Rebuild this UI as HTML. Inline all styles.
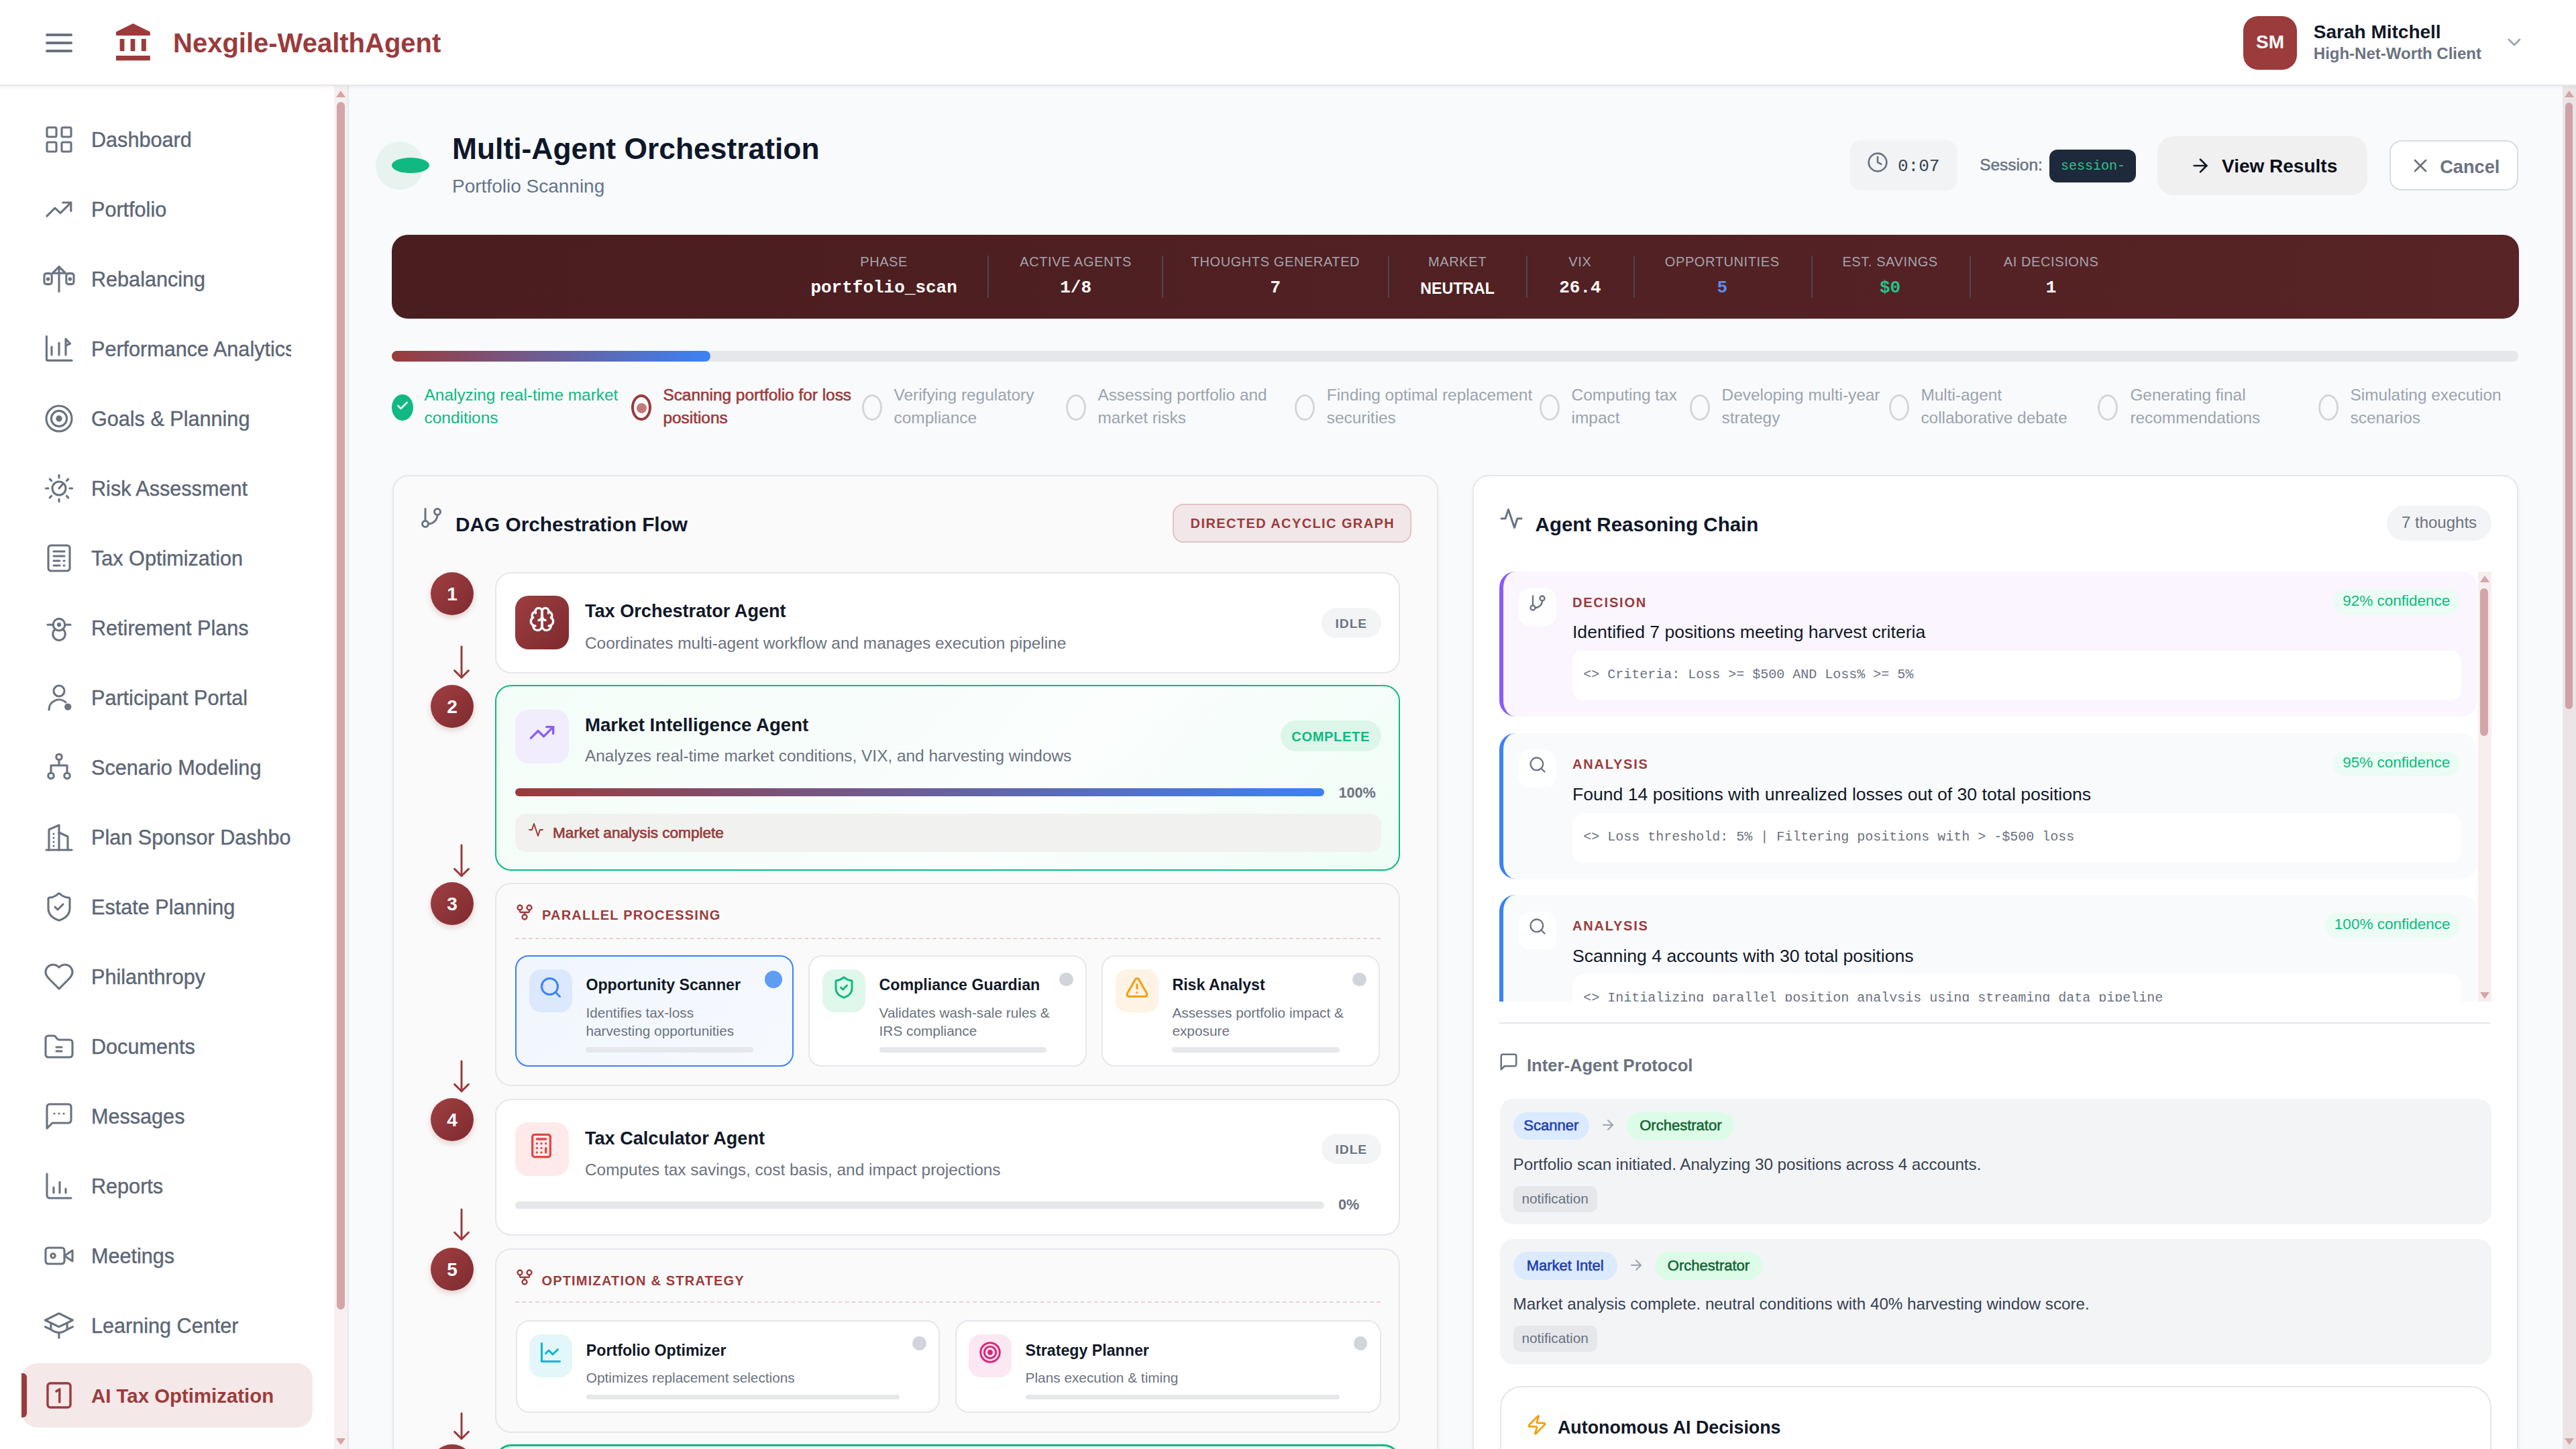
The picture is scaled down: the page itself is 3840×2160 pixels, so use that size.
<!DOCTYPE html>
<html><head><meta charset="utf-8"><title>Multi-Agent Orchestration</title>
<style>
html,body{margin:0;padding:0;}
html{zoom:1;}
@media (min-width:2400px){html{zoom:2;}}
body{width:1920px;height:1080px;overflow:hidden;position:relative;background:#f8fafc;font-family:'Liberation Sans', sans-serif;}
#root{position:absolute;left:0;top:0;width:1920px;height:1080px;overflow:hidden;}
#root div{position:absolute;}
#root div.t{white-space:nowrap;}
#root svg.i{position:absolute;overflow:visible;}
.circ{border-radius:50%;}
.num{background:linear-gradient(135deg,#a03f41,#7e2b30);box-shadow:0 2px 4px rgba(155,59,59,.22);}
#hdr{left:0;top:0;width:1920px;height:63px;background:#fff;border-bottom:1px solid #e5e7eb;}
#side{}
</style></head>
<body><div id="root">
<div style="left:0;top:64px;width:259px;height:1016px;background:#fff;"></div>
<div id="hdr"></div><div style="left:34.00px;top:25.00px;width:20.00px;height:2.00px;background:#6b7280;border-radius:1px;"></div><div style="left:34.00px;top:31.00px;width:20.00px;height:2.00px;background:#6b7280;border-radius:1px;"></div><div style="left:34.00px;top:37.00px;width:20.00px;height:2.00px;background:#6b7280;border-radius:1px;"></div><svg class="i" style="left:86.6px;top:17.5px" width="25.4" height="27.6" viewBox="0 0 25.4 27.6" fill="#9b3b3b"><polygon points="0,9 0,6.2 12.7,0 25.4,6.2 25.4,9"/><rect x="2.8" y="11.5" width="3.4" height="9.1"/><rect x="10.8" y="11.5" width="3.4" height="9.1"/><rect x="18.9" y="11.5" width="3.5" height="9.1"/><rect x="0" y="24" width="25.4" height="3.6"/></svg><div class="t" style="left:129.00px;top:22.17px;font-size:20px;line-height:20px;color:#9b3b3b;font-weight:bold;font-family:'Liberation Sans', sans-serif;">Nexgile-WealthAgent</div><div style="left:1672.00px;top:12.00px;width:40.00px;height:40.00px;background:#9b3b3b;border-radius:11px;"></div><div class="t" style="left:1672.00px;top:24.35px;font-size:14px;line-height:14px;color:#fff;font-weight:bold;font-family:'Liberation Sans', sans-serif;width:40px;text-align:center;">SM</div><div class="t" style="left:1724.40px;top:17.00px;font-size:14px;line-height:14px;color:#111827;font-weight:bold;font-family:'Liberation Sans', sans-serif;">Sarah Mitchell</div><div class="t" style="left:1724.40px;top:33.84px;font-size:12px;line-height:12px;color:#6b7280;font-weight:bold;font-family:'Liberation Sans', sans-serif;">High-Net-Worth Client</div><svg class="i" style="left:1866.00px;top:23.50px;" width="16" height="16" viewBox="0 0 24 24" fill="none" stroke="#9ca3af" stroke-width="2" stroke-linecap="round" stroke-linejoin="round"><path d="m6 9 6 6 6-6"/></svg><svg class="i" style="left:32.00px;top:92.00px;color:#6b7280;" width="24" height="24" viewBox="0 0 24 24" fill="none" stroke="#6b7280" stroke-width="1.55" stroke-linecap="round" stroke-linejoin="round"><rect x="3" y="3" width="7" height="7" rx="1"/><rect x="14" y="3" width="7" height="7" rx="1"/><rect x="14" y="14" width="7" height="7" rx="1"/><rect x="3" y="14" width="7" height="7" rx="1"/></svg><div class="t" style="left:68px;top:94.20px;width:149px;overflow:hidden;font-size:15.3px;line-height:20px;color:#5c6675;-webkit-text-stroke:0.2px #5c6675;">Dashboard</div><svg class="i" style="left:32.00px;top:144.00px;color:#6b7280;" width="24" height="24" viewBox="0 0 24 24" fill="none" stroke="#6b7280" stroke-width="1.55" stroke-linecap="round" stroke-linejoin="round"><polyline points="2.9 17.06 8.94 11.1 13 14.8 20.9 6.97"/><polyline points="14.9 6.97 20.9 6.97 20.9 13.2"/></svg><div class="t" style="left:68px;top:146.20px;width:149px;overflow:hidden;font-size:15.3px;line-height:20px;color:#5c6675;-webkit-text-stroke:0.2px #5c6675;">Portfolio</div><svg class="i" style="left:32.00px;top:196.00px;color:#6b7280;" width="24" height="24" viewBox="0 0 24 24" fill="none" stroke="#6b7280" stroke-width="1.55" stroke-linecap="round" stroke-linejoin="round"><path d="M12 2.8V21.2"/><path d="M7.2 7.6 12 2.8l4.8 4.8z"/><rect x="1" y="7.8" width="5.6" height="8" rx="1.6"/><rect x="17.4" y="7.8" width="5.6" height="8" rx="1.6"/><circle cx="3.8" cy="12" r=".6" fill="currentColor"/><circle cx="20.2" cy="12" r=".6" fill="currentColor"/></svg><div class="t" style="left:68px;top:198.20px;width:149px;overflow:hidden;font-size:15.3px;line-height:20px;color:#5c6675;-webkit-text-stroke:0.2px #5c6675;">Rebalancing</div><svg class="i" style="left:32.00px;top:248.00px;color:#6b7280;" width="24" height="24" viewBox="0 0 24 24" fill="none" stroke="#6b7280" stroke-width="1.55" stroke-linecap="round" stroke-linejoin="round"><path d="M2.7 2.7v17.2a.8.8 0 0 0 .8.8h18"/><path d="M6.5 10.5v6"/><path d="M12 7.6v8.9"/><path d="M17 16.5V4.6l3.2 3.6-3 1.3"/></svg><div class="t" style="left:68px;top:250.20px;width:149px;overflow:hidden;font-size:15.3px;line-height:20px;color:#5c6675;-webkit-text-stroke:0.2px #5c6675;">Performance Analytics</div><svg class="i" style="left:32.00px;top:300.00px;color:#6b7280;" width="24" height="24" viewBox="0 0 24 24" fill="none" stroke="#6b7280" stroke-width="1.55" stroke-linecap="round" stroke-linejoin="round"><circle cx="12" cy="12" r="9.5"/><circle cx="12" cy="12" r="5.8"/><circle cx="12" cy="12" r="1.6" fill="currentColor"/></svg><div class="t" style="left:68px;top:302.20px;width:149px;overflow:hidden;font-size:15.3px;line-height:20px;color:#5c6675;-webkit-text-stroke:0.2px #5c6675;">Goals &amp; Planning</div><svg class="i" style="left:32.00px;top:352.00px;color:#6b7280;" width="24" height="24" viewBox="0 0 24 24" fill="none" stroke="#6b7280" stroke-width="1.55" stroke-linecap="round" stroke-linejoin="round"><circle cx="12" cy="12" r="5"/><path d="M12 12l2.6-3"/><path d="M12 2.2v1.8M12 20v1.8M2.2 12H4M20 12h1.8M5.1 5.1l1.2 1.2M17.7 17.7l1.2 1.2M5.1 18.9l1.2-1.2M17.7 6.3l1.2-1.2"/></svg><div class="t" style="left:68px;top:354.20px;width:149px;overflow:hidden;font-size:15.3px;line-height:20px;color:#5c6675;-webkit-text-stroke:0.2px #5c6675;">Risk Assessment</div><svg class="i" style="left:32.00px;top:404.00px;color:#6b7280;" width="24" height="24" viewBox="0 0 24 24" fill="none" stroke="#6b7280" stroke-width="1.55" stroke-linecap="round" stroke-linejoin="round"><rect x="4" y="2.5" width="16" height="19" rx="2"/><path d="M8 7h8M8 10.5h8M8 14h4.5M15.5 14h.5M8 17.5h4.5M15.5 17.5h.5"/></svg><div class="t" style="left:68px;top:406.20px;width:149px;overflow:hidden;font-size:15.3px;line-height:20px;color:#5c6675;-webkit-text-stroke:0.2px #5c6675;">Tax Optimization</div><svg class="i" style="left:32.00px;top:456.00px;color:#6b7280;" width="24" height="24" viewBox="0 0 24 24" fill="none" stroke="#6b7280" stroke-width="1.55" stroke-linecap="round" stroke-linejoin="round"><circle cx="12" cy="9.6" r="4.4"/><path d="M9.2 13a4.6 4.6 0 1 0 5.6 0"/><path d="M3.5 9.6h4.1M16.4 9.6h4.1"/><circle cx="12" cy="9.6" r=".8" fill="currentColor"/></svg><div class="t" style="left:68px;top:458.20px;width:149px;overflow:hidden;font-size:15.3px;line-height:20px;color:#5c6675;-webkit-text-stroke:0.2px #5c6675;">Retirement Plans</div><svg class="i" style="left:32.00px;top:508.00px;color:#6b7280;" width="24" height="24" viewBox="0 0 24 24" fill="none" stroke="#6b7280" stroke-width="1.55" stroke-linecap="round" stroke-linejoin="round"><circle cx="12" cy="7" r="4"/><path d="M4.5 21a7.5 7.5 0 0 1 12.5-5.6"/><circle cx="18.6" cy="18.8" r="2.6" fill="currentColor" stroke="none"/></svg><div class="t" style="left:68px;top:510.20px;width:149px;overflow:hidden;font-size:15.3px;line-height:20px;color:#5c6675;-webkit-text-stroke:0.2px #5c6675;">Participant Portal</div><svg class="i" style="left:32.00px;top:560.00px;color:#6b7280;" width="24" height="24" viewBox="0 0 24 24" fill="none" stroke="#6b7280" stroke-width="1.55" stroke-linecap="round" stroke-linejoin="round"><circle cx="12" cy="4.2" r="2.1"/><path d="M12 6.3v4.2M6 16v-5.5h12V16"/><circle cx="6" cy="18.2" r="2.1"/><circle cx="18" cy="18.2" r="2.1"/></svg><div class="t" style="left:68px;top:562.20px;width:149px;overflow:hidden;font-size:15.3px;line-height:20px;color:#5c6675;-webkit-text-stroke:0.2px #5c6675;">Scenario Modeling</div><svg class="i" style="left:32.00px;top:612.00px;color:#6b7280;" width="24" height="24" viewBox="0 0 24 24" fill="none" stroke="#6b7280" stroke-width="1.55" stroke-linecap="round" stroke-linejoin="round"><path d="M2.5 21.5h19"/><path d="M4.5 21.5V6.3L12 3v18.5"/><path d="M12 8.5l6.5 3v10"/><path d="M8 9.5v.01M8 12.5v.01M8 15.5v.01M8 18.5v.01"/></svg><div class="t" style="left:68px;top:614.20px;width:149px;overflow:hidden;font-size:15.3px;line-height:20px;color:#5c6675;-webkit-text-stroke:0.2px #5c6675;">Plan Sponsor Dashboard</div><svg class="i" style="left:32.00px;top:664.00px;color:#6b7280;" width="24" height="24" viewBox="0 0 24 24" fill="none" stroke="#6b7280" stroke-width="1.55" stroke-linecap="round" stroke-linejoin="round"><path d="M20 13c0 5-3.5 7.5-7.66 8.95a1 1 0 0 1-.67-.01C7.5 20.5 4 18 4 13V6a1 1 0 0 1 1-1c2 0 4.5-1.2 6.24-2.72a1.17 1.17 0 0 1 1.52 0C14.51 3.81 17 5 19 5a1 1 0 0 1 1 1z"/><path d="m9 12 2 2 4-4"/></svg><div class="t" style="left:68px;top:666.20px;width:149px;overflow:hidden;font-size:15.3px;line-height:20px;color:#5c6675;-webkit-text-stroke:0.2px #5c6675;">Estate Planning</div><svg class="i" style="left:32.00px;top:716.00px;color:#6b7280;" width="24" height="24" viewBox="0 0 24 24" fill="none" stroke="#6b7280" stroke-width="1.55" stroke-linecap="round" stroke-linejoin="round"><path d="M19 14c1.49-1.46 3-3.21 3-5.5A5.5 5.5 0 0 0 16.5 3c-1.76 0-3 .5-4.5 2-1.5-1.5-2.74-2-4.5-2A5.5 5.5 0 0 0 2 8.5c0 2.3 1.5 4.05 3 5.5l7 7Z"/></svg><div class="t" style="left:68px;top:718.20px;width:149px;overflow:hidden;font-size:15.3px;line-height:20px;color:#5c6675;-webkit-text-stroke:0.2px #5c6675;">Philanthropy</div><svg class="i" style="left:32.00px;top:768.00px;color:#6b7280;" width="24" height="24" viewBox="0 0 24 24" fill="none" stroke="#6b7280" stroke-width="1.55" stroke-linecap="round" stroke-linejoin="round"><path d="M20 20a2 2 0 0 0 2-2V9a2 2 0 0 0-2-2h-7.9a2 2 0 0 1-1.69-.9L9.6 4.9A2 2 0 0 0 7.93 4H4a2 2 0 0 0-2 2v12a2 2 0 0 0 2 2Z"/><path d="M10 12.5h4M10 15.5h4"/></svg><div class="t" style="left:68px;top:770.20px;width:149px;overflow:hidden;font-size:15.3px;line-height:20px;color:#5c6675;-webkit-text-stroke:0.2px #5c6675;">Documents</div><svg class="i" style="left:32.00px;top:820.00px;color:#6b7280;" width="24" height="24" viewBox="0 0 24 24" fill="none" stroke="#6b7280" stroke-width="1.55" stroke-linecap="round" stroke-linejoin="round"><path d="M21 15a2 2 0 0 1-2 2H7l-4 4V5a2 2 0 0 1 2-2h14a2 2 0 0 1 2 2z"/><path d="M8.5 10h.01M12 10h.01M15.5 10h.01"/></svg><div class="t" style="left:68px;top:822.20px;width:149px;overflow:hidden;font-size:15.3px;line-height:20px;color:#5c6675;-webkit-text-stroke:0.2px #5c6675;">Messages</div><svg class="i" style="left:32.00px;top:872.00px;color:#6b7280;" width="24" height="24" viewBox="0 0 24 24" fill="none" stroke="#6b7280" stroke-width="1.55" stroke-linecap="round" stroke-linejoin="round"><path d="M3 3v16a2 2 0 0 0 2 2h16"/><path d="M8 17v-4M12.5 17V9M17 17v-3"/></svg><div class="t" style="left:68px;top:874.20px;width:149px;overflow:hidden;font-size:15.3px;line-height:20px;color:#5c6675;-webkit-text-stroke:0.2px #5c6675;">Reports</div><svg class="i" style="left:32.00px;top:924.00px;color:#6b7280;" width="24" height="24" viewBox="0 0 24 24" fill="none" stroke="#6b7280" stroke-width="1.55" stroke-linecap="round" stroke-linejoin="round"><rect x="2" y="6" width="14" height="12" rx="2"/><path d="m22 8-6 4 6 4V8Z"/><circle cx="7.5" cy="12" r="1.6"/></svg><div class="t" style="left:68px;top:926.20px;width:149px;overflow:hidden;font-size:15.3px;line-height:20px;color:#5c6675;-webkit-text-stroke:0.2px #5c6675;">Meetings</div><svg class="i" style="left:32.00px;top:976.00px;color:#6b7280;" width="24" height="24" viewBox="0 0 24 24" fill="none" stroke="#6b7280" stroke-width="1.55" stroke-linecap="round" stroke-linejoin="round"><path d="M1.7 8 11.95 2.9 22.2 8 11.95 12.9Z"/><path d="M5.94 10.1v4.8M18.05 10.1v4.8"/><path d="M1.7 12.9l4.24 2Q11.95 19.6 18.05 14.9l4.15-2"/><path d="M11.95 17.4v3.7"/></svg><div class="t" style="left:68px;top:978.20px;width:149px;overflow:hidden;font-size:15.3px;line-height:20px;color:#5c6675;-webkit-text-stroke:0.2px #5c6675;">Learning Center</div><div style="left:16.00px;top:1016.00px;width:217.00px;height:48.00px;background:#f5e8e9;border-radius:12px;"></div><div style="left:16.00px;top:1023.40px;width:4.00px;height:33.20px;background:#9b3b3b;border-radius:0 3px 3px 0;"></div><svg class="i" style="left:32.00px;top:1028.00px;color:#9b3b3b;" width="24" height="24" viewBox="0 0 24 24" fill="none" stroke="#9b3b3b" stroke-width="1.7" stroke-linecap="round" stroke-linejoin="round"><rect x="3.5" y="3" width="17" height="18" rx="2"/><path d="M10 9l2.4-1.6V17"/></svg><div class="t" style="left:68px;top:1033.05px;font-size:14.7px;line-height:15.3px;color:#9b3b3b;font-weight:bold;">AI Tax Optimization</div><div class="circ" style="left:280px;top:105.4px;width:36px;height:36px;background:#e8f3ef;"></div><div class="circ" style="left:292px;top:117.6px;width:28px;height:11.6px;background:#10b981;"></div><div class="t" style="left:337.00px;top:100.01px;font-size:22.2px;line-height:22.2px;color:#0f172a;font-weight:bold;font-family:'Liberation Sans', sans-serif;">Multi-Agent Orchestration</div><div class="t" style="left:337.00px;top:132.05px;font-size:14px;line-height:14px;color:#64748b;font-weight:normal;font-family:'Liberation Sans', sans-serif;">Portfolio Scanning</div><div style="left:1378.50px;top:104.50px;width:80.70px;height:37.50px;background:#f1f3f5;border-radius:9px;"></div><svg class="i" style="left:1391.50px;top:113.00px;" width="16" height="16" viewBox="0 0 24 24" fill="none" stroke="#6b7280" stroke-width="2" stroke-linecap="round" stroke-linejoin="round"><circle cx="12" cy="12" r="10"/><polyline points="12 6 12 12 16 14"/></svg><div class="t" style="left:1414.50px;top:117.30px;font-size:13px;line-height:13px;color:#374151;font-weight:normal;font-family:'Liberation Mono', monospace;">0:07</div><div class="t" style="left:1475.60px;top:116.87px;font-size:12.2px;line-height:12.2px;color:#6b7280;font-weight:normal;font-family:'Liberation Sans', sans-serif;-webkit-text-stroke:0.25px #6b7280;">Session:</div><div style="left:1527.30px;top:111.30px;width:64.70px;height:24.60px;background:#1e293b;border-radius:6px;"></div><div class="t" style="left:1536.00px;top:118.94px;font-size:10px;line-height:10px;color:#34c38f;font-weight:normal;font-family:'Liberation Mono', monospace;">session-</div><div style="left:1608.00px;top:101.70px;width:156.70px;height:43.70px;background:#f0f0f0;border-radius:12px;"></div><svg class="i" style="left:1631.80px;top:115.50px;" width="16" height="16" viewBox="0 0 24 24" fill="none" stroke="#111827" stroke-width="2" stroke-linecap="round" stroke-linejoin="round"><path d="M5 12h14"/><path d="m12 5 7 7-7 7"/></svg><div class="t" style="left:1656.00px;top:117.05px;font-size:14px;line-height:14px;color:#0b0f19;font-weight:bold;font-family:'Liberation Sans', sans-serif;">View Results</div><div style="left:1781.00px;top:104.70px;width:96.00px;height:37.30px;background:#fff;border:1px solid #d9dde3;border-radius:9px;box-sizing:border-box;"></div><svg class="i" style="left:1795.80px;top:115.60px;" width="16" height="16" viewBox="0 0 24 24" fill="none" stroke="#6b7280" stroke-width="2" stroke-linecap="round" stroke-linejoin="round"><path d="M18 6 6 18"/><path d="m6 6 12 12"/></svg><div class="t" style="left:1818.60px;top:117.39px;font-size:13.6px;line-height:13.6px;color:#6b7280;font-weight:bold;font-family:'Liberation Sans', sans-serif;">Cancel</div><div style="left:292.00px;top:175.20px;width:1585.40px;height:62.20px;background:linear-gradient(90deg,#4a1d1f,#582426);border-radius:12px;"></div><div class="t" style="left:558.80px;top:190.13px;font-size:10px;line-height:10px;color:#a6a3ad;font-weight:normal;font-family:'Liberation Sans', sans-serif;width:200px;text-align:center;letter-spacing:0.3px;">PHASE</div><div class="t" style="left:558.80px;top:208.10px;font-size:13px;line-height:13px;color:#fff;font-weight:bold;font-family:'Liberation Mono', monospace;width:200px;text-align:center;">portfolio_scan</div><div class="t" style="left:701.80px;top:190.13px;font-size:10px;line-height:10px;color:#a6a3ad;font-weight:normal;font-family:'Liberation Sans', sans-serif;width:200px;text-align:center;letter-spacing:0.3px;">ACTIVE AGENTS</div><div class="t" style="left:701.80px;top:208.10px;font-size:13px;line-height:13px;color:#fff;font-weight:bold;font-family:'Liberation Mono', monospace;width:200px;text-align:center;">1/8</div><div class="t" style="left:850.70px;top:190.13px;font-size:10px;line-height:10px;color:#a6a3ad;font-weight:normal;font-family:'Liberation Sans', sans-serif;width:200px;text-align:center;letter-spacing:0.3px;">THOUGHTS GENERATED</div><div class="t" style="left:850.70px;top:208.10px;font-size:13px;line-height:13px;color:#fff;font-weight:bold;font-family:'Liberation Mono', monospace;width:200px;text-align:center;">7</div><div class="t" style="left:986.30px;top:190.13px;font-size:10px;line-height:10px;color:#a6a3ad;font-weight:normal;font-family:'Liberation Sans', sans-serif;width:200px;text-align:center;letter-spacing:0.3px;">MARKET</div><div class="t" style="left:986.30px;top:209.28px;font-size:11.6px;line-height:11.6px;color:#fff;font-weight:bold;font-family:'Liberation Sans', sans-serif;width:200px;text-align:center;">NEUTRAL</div><div class="t" style="left:1077.70px;top:190.13px;font-size:10px;line-height:10px;color:#a6a3ad;font-weight:normal;font-family:'Liberation Sans', sans-serif;width:200px;text-align:center;letter-spacing:0.3px;">VIX</div><div class="t" style="left:1077.70px;top:208.10px;font-size:13px;line-height:13px;color:#fff;font-weight:bold;font-family:'Liberation Mono', monospace;width:200px;text-align:center;">26.4</div><div class="t" style="left:1183.60px;top:190.13px;font-size:10px;line-height:10px;color:#a6a3ad;font-weight:normal;font-family:'Liberation Sans', sans-serif;width:200px;text-align:center;letter-spacing:0.3px;">OPPORTUNITIES</div><div class="t" style="left:1183.60px;top:208.10px;font-size:13px;line-height:13px;color:#5b8def;font-weight:bold;font-family:'Liberation Mono', monospace;width:200px;text-align:center;">5</div><div class="t" style="left:1308.80px;top:190.13px;font-size:10px;line-height:10px;color:#a6a3ad;font-weight:normal;font-family:'Liberation Sans', sans-serif;width:200px;text-align:center;letter-spacing:0.3px;">EST. SAVINGS</div><div class="t" style="left:1308.80px;top:208.10px;font-size:13px;line-height:13px;color:#22c58b;font-weight:bold;font-family:'Liberation Mono', monospace;width:200px;text-align:center;">$0</div><div class="t" style="left:1428.80px;top:190.13px;font-size:10px;line-height:10px;color:#a6a3ad;font-weight:normal;font-family:'Liberation Sans', sans-serif;width:200px;text-align:center;letter-spacing:0.3px;">AI DECISIONS</div><div class="t" style="left:1428.80px;top:208.10px;font-size:13px;line-height:13px;color:#fff;font-weight:bold;font-family:'Liberation Mono', monospace;width:200px;text-align:center;">1</div><div style="left:736.00px;top:190.50px;width:1.00px;height:31.50px;background:#4b4650;"></div><div style="left:866.00px;top:190.50px;width:1.00px;height:31.50px;background:#4b4650;"></div><div style="left:1034.40px;top:190.50px;width:1.00px;height:31.50px;background:#4b4650;"></div><div style="left:1137.50px;top:190.50px;width:1.00px;height:31.50px;background:#4b4650;"></div><div style="left:1217.40px;top:190.50px;width:1.00px;height:31.50px;background:#4b4650;"></div><div style="left:1350.10px;top:190.50px;width:1.00px;height:31.50px;background:#4b4650;"></div><div style="left:1468.00px;top:190.50px;width:1.00px;height:31.50px;background:#4b4650;"></div><div style="left:292.00px;top:261.60px;width:1585.00px;height:7.80px;background:#e5e7eb;border-radius:4px;"></div><div style="left:292.00px;top:261.60px;width:237.50px;height:7.80px;background:linear-gradient(90deg,#9b3b3b,#3b82f6);border-radius:4px;"></div><div class="circ" style="left:292px;top:293.8px;width:16px;height:19.7px;background:#10b981;"></div><svg class="i" style="left:295.00px;top:297.50px;" width="10" height="10" viewBox="0 0 24 24" fill="none" stroke="#fff" stroke-width="3" stroke-linecap="round" stroke-linejoin="round"><path d="M20 6 9 17l-5-5"/></svg><div class="t" style="left:316.30px;top:288.37px;font-size:12.2px;line-height:12.2px;color:#10b981;font-weight:normal;font-family:'Liberation Sans', sans-serif;">Analyzing real-time market</div><div class="t" style="left:316.30px;top:305.27px;font-size:12.2px;line-height:12.2px;color:#10b981;font-weight:normal;font-family:'Liberation Sans', sans-serif;">conditions</div><div class="circ" style="left:470.6px;top:293.8px;width:15px;height:19.7px;border:2px solid #9b3b3b;box-sizing:border-box;"></div><div class="circ" style="left:474.40000000000003px;top:300.4px;width:7.4px;height:7.4px;background:#c07a7a;"></div><div class="t" style="left:494.20px;top:288.37px;font-size:12.2px;line-height:12.2px;color:#9b3b3b;font-weight:normal;font-family:'Liberation Sans', sans-serif;-webkit-text-stroke:0.3px #9b3b3b;">Scanning portfolio for loss</div><div class="t" style="left:494.20px;top:305.27px;font-size:12.2px;line-height:12.2px;color:#9b3b3b;font-weight:normal;font-family:'Liberation Sans', sans-serif;-webkit-text-stroke:0.3px #9b3b3b;">positions</div><div class="circ" style="left:642.3px;top:293.8px;width:15px;height:19.7px;border:1.8px solid #d4d6da;box-sizing:border-box;"></div><div class="t" style="left:666.30px;top:288.37px;font-size:12.2px;line-height:12.2px;color:#9ca3af;font-weight:normal;font-family:'Liberation Sans', sans-serif;">Verifying regulatory</div><div class="t" style="left:666.30px;top:305.27px;font-size:12.2px;line-height:12.2px;color:#9ca3af;font-weight:normal;font-family:'Liberation Sans', sans-serif;">compliance</div><div class="circ" style="left:794.3px;top:293.8px;width:15px;height:19.7px;border:1.8px solid #d4d6da;box-sizing:border-box;"></div><div class="t" style="left:818.20px;top:288.37px;font-size:12.2px;line-height:12.2px;color:#9ca3af;font-weight:normal;font-family:'Liberation Sans', sans-serif;">Assessing portfolio and</div><div class="t" style="left:818.20px;top:305.27px;font-size:12.2px;line-height:12.2px;color:#9ca3af;font-weight:normal;font-family:'Liberation Sans', sans-serif;">market risks</div><div class="circ" style="left:965px;top:293.8px;width:15px;height:19.7px;border:1.8px solid #d4d6da;box-sizing:border-box;"></div><div class="t" style="left:988.90px;top:288.37px;font-size:12.2px;line-height:12.2px;color:#9ca3af;font-weight:normal;font-family:'Liberation Sans', sans-serif;">Finding optimal replacement</div><div class="t" style="left:988.90px;top:305.27px;font-size:12.2px;line-height:12.2px;color:#9ca3af;font-weight:normal;font-family:'Liberation Sans', sans-serif;">securities</div><div class="circ" style="left:1147.3px;top:293.8px;width:15px;height:19.7px;border:1.8px solid #d4d6da;box-sizing:border-box;"></div><div class="t" style="left:1171.30px;top:288.37px;font-size:12.2px;line-height:12.2px;color:#9ca3af;font-weight:normal;font-family:'Liberation Sans', sans-serif;">Computing tax</div><div class="t" style="left:1171.30px;top:305.27px;font-size:12.2px;line-height:12.2px;color:#9ca3af;font-weight:normal;font-family:'Liberation Sans', sans-serif;">impact</div><div class="circ" style="left:1259.3px;top:293.8px;width:15px;height:19.7px;border:1.8px solid #d4d6da;box-sizing:border-box;"></div><div class="t" style="left:1283.30px;top:288.37px;font-size:12.2px;line-height:12.2px;color:#9ca3af;font-weight:normal;font-family:'Liberation Sans', sans-serif;">Developing multi-year</div><div class="t" style="left:1283.30px;top:305.27px;font-size:12.2px;line-height:12.2px;color:#9ca3af;font-weight:normal;font-family:'Liberation Sans', sans-serif;">strategy</div><div class="circ" style="left:1408.2px;top:293.8px;width:15px;height:19.7px;border:1.8px solid #d4d6da;box-sizing:border-box;"></div><div class="t" style="left:1431.70px;top:288.37px;font-size:12.2px;line-height:12.2px;color:#9ca3af;font-weight:normal;font-family:'Liberation Sans', sans-serif;">Multi-agent</div><div class="t" style="left:1431.70px;top:305.27px;font-size:12.2px;line-height:12.2px;color:#9ca3af;font-weight:normal;font-family:'Liberation Sans', sans-serif;">collaborative debate</div><div class="circ" style="left:1563.3px;top:293.8px;width:15px;height:19.7px;border:1.8px solid #d4d6da;box-sizing:border-box;"></div><div class="t" style="left:1587.70px;top:288.37px;font-size:12.2px;line-height:12.2px;color:#9ca3af;font-weight:normal;font-family:'Liberation Sans', sans-serif;">Generating final</div><div class="t" style="left:1587.70px;top:305.27px;font-size:12.2px;line-height:12.2px;color:#9ca3af;font-weight:normal;font-family:'Liberation Sans', sans-serif;">recommendations</div><div class="circ" style="left:1728px;top:293.8px;width:15px;height:19.7px;border:1.8px solid #d4d6da;box-sizing:border-box;"></div><div class="t" style="left:1751.80px;top:288.37px;font-size:12.2px;line-height:12.2px;color:#9ca3af;font-weight:normal;font-family:'Liberation Sans', sans-serif;">Simulating execution</div><div class="t" style="left:1751.80px;top:305.27px;font-size:12.2px;line-height:12.2px;color:#9ca3af;font-weight:normal;font-family:'Liberation Sans', sans-serif;">scenarios</div><div style="left:292.30px;top:354.20px;width:779.70px;height:845.80px;background:#fafafa;border:1px solid #e7e8eb;border-radius:12px;box-sizing:border-box;box-shadow:0 1px 3px rgba(0,0,0,.05);"></div><svg class="i" style="left:312.50px;top:377.00px;" width="18" height="18" viewBox="0 0 24 24" fill="none" stroke="#6b7280" stroke-width="2" stroke-linecap="round" stroke-linejoin="round"><line x1="6" x2="6" y1="3" y2="15"/><circle cx="18" cy="6" r="3"/><circle cx="6" cy="18" r="3"/><path d="M18 9a9 9 0 0 1-9 9"/></svg><div class="t" style="left:339.50px;top:383.39px;font-size:14.9px;line-height:14.9px;color:#0f172a;font-weight:bold;font-family:'Liberation Sans', sans-serif;">DAG Orchestration Flow</div><div style="left:873.80px;top:375.40px;width:178.10px;height:28.90px;background:#f2e7e8;border:1px solid #e3c3c5;border-radius:8px;box-sizing:border-box;"></div><div class="t" style="left:887.30px;top:385.04px;font-size:10px;line-height:10px;color:#9b3b3b;font-weight:bold;font-family:'Liberation Sans', sans-serif;letter-spacing:0.7px;">DIRECTED ACYCLIC GRAPH</div><div class="circ num" style="left:321px;top:426.5px;width:32px;height:32px;"><span style="position:absolute;left:0;top:9.35px;width:32px;text-align:center;font-size:14px;line-height:14px;font-weight:bold;color:#fff;">1</span></div><div style="left:369.00px;top:426.70px;width:674.60px;height:75.10px;background:#fff;border:1px solid #e5e7eb;border-radius:12px;box-sizing:border-box;"></div><div style="left:384.00px;top:444.00px;width:40.00px;height:40.00px;background:linear-gradient(135deg,#9e3e40,#7d2a2f);border-radius:10px;"></div><svg class="i" style="left:394.00px;top:451.50px;" width="20" height="20" viewBox="0 0 24 24" fill="none" stroke="#fff" stroke-width="2" stroke-linecap="round" stroke-linejoin="round"><path d="M12 5a3 3 0 1 0-5.997.125 4 4 0 0 0-2.526 5.77 4 4 0 0 0 .556 6.588A4 4 0 1 0 12 18Z"/><path d="M12 5a3 3 0 1 1 5.997.125 4 4 0 0 1 2.526 5.77 4 4 0 0 1-.556 6.588A4 4 0 1 1 12 18Z"/><path d="M15 13a4.5 4.5 0 0 1-3-4 4.5 4.5 0 0 1-3 4"/><path d="M17.599 6.5a3 3 0 0 0 .399-1.375"/><path d="M6.003 5.125A3 3 0 0 0 6.401 6.5"/><path d="M3.477 10.896a4 4 0 0 1 .585-.396"/><path d="M19.938 10.5a4 4 0 0 1 .585.396"/><path d="M6 18a4 4 0 0 1-1.967-.516"/><path d="M19.967 17.484A4 4 0 0 1 18 18"/></svg><div class="t" style="left:436.00px;top:448.73px;font-size:13.55px;line-height:13.55px;color:#111827;font-weight:bold;font-family:'Liberation Sans', sans-serif;">Tax Orchestrator Agent</div><div class="t" style="left:436.00px;top:473.57px;font-size:12.2px;line-height:12.2px;color:#6b7280;font-weight:normal;font-family:'Liberation Sans', sans-serif;">Coordinates multi-agent workflow and manages execution pipeline</div><div style="left:985.00px;top:453.00px;width:44.30px;height:22.70px;background:#f3f4f6;border-radius:12px;"></div><div class="t" style="left:977.15px;top:460.17px;font-size:9.6px;line-height:9.6px;color:#6b7280;font-weight:bold;font-family:'Liberation Sans', sans-serif;width:60px;text-align:center;letter-spacing:0.5px;">IDLE</div><svg class="i" style="left:337.8px;top:481.6px" width="12" height="24.9" viewBox="0 0 12 24.9" fill="none" stroke="#9b3b3b" stroke-width="1.5" stroke-linecap="round" stroke-linejoin="round"><path d="M6 0.5V23.4"/><path d="M0.8 18.3L6 23.5L11.2 18.3"/></svg><div class="circ num" style="left:321px;top:510.6px;width:32px;height:32px;"><span style="position:absolute;left:0;top:9.35px;width:32px;text-align:center;font-size:14px;line-height:14px;font-weight:bold;color:#fff;">2</span></div><div style="left:369.00px;top:510.60px;width:674.60px;height:138.40px;background:linear-gradient(135deg,#f3fdf8,#fbfefd 60%,#effdf6);border:1px solid #10b981;border-radius:12px;box-sizing:border-box;"></div><div style="left:384.00px;top:529.00px;width:40.00px;height:40.00px;background:#f1edfd;border-radius:10px;"></div><svg class="i" style="left:394.00px;top:536.00px;" width="20" height="20" viewBox="0 0 24 24" fill="none" stroke="#8b5cf6" stroke-width="2" stroke-linecap="round" stroke-linejoin="round"><polyline points="22 7 13.5 15.5 8.5 10.5 2 17"/><polyline points="16 7 22 7 22 13"/></svg><div class="t" style="left:436.00px;top:533.32px;font-size:13.8px;line-height:13.8px;color:#111827;font-weight:bold;font-family:'Liberation Sans', sans-serif;">Market Intelligence Agent</div><div class="t" style="left:436.00px;top:557.67px;font-size:12.2px;line-height:12.2px;color:#6b7280;font-weight:normal;font-family:'Liberation Sans', sans-serif;">Analyzes real-time market conditions, VIX, and harvesting windows</div><div style="left:954.30px;top:536.90px;width:75.00px;height:23.10px;background:#dcf6ea;border-radius:12px;"></div><div class="t" style="left:951.80px;top:544.03px;font-size:10px;line-height:10px;color:#10b981;font-weight:bold;font-family:'Liberation Sans', sans-serif;width:80px;text-align:center;letter-spacing:0.35px;">COMPLETE</div><div style="left:384.00px;top:587.50px;width:603.10px;height:6.00px;background:linear-gradient(90deg,#9b3b3b,#3b82f6);border-radius:3px;"></div><div class="t" style="left:997.80px;top:585.66px;font-size:10.8px;line-height:10.8px;color:#6b7280;font-weight:bold;font-family:'Liberation Sans', sans-serif;">100%</div><div style="left:384.00px;top:606.60px;width:645.30px;height:28.40px;background:#f1f2ef;border-radius:8px;"></div><svg class="i" style="left:393.60px;top:612.30px;" width="12" height="12" viewBox="0 0 24 24" fill="none" stroke="#9b3b3b" stroke-width="2" stroke-linecap="round" stroke-linejoin="round"><polyline points="22 12 18 12 15 21 9 3 6 12 2 12"/></svg><div class="t" style="left:412.00px;top:615.28px;font-size:11.3px;line-height:11.3px;color:#9b3b3b;font-weight:normal;font-family:'Liberation Sans', sans-serif;-webkit-text-stroke:0.35px #9b3b3b;">Market analysis complete</div><svg class="i" style="left:337.8px;top:629.6px" width="12" height="24.8" viewBox="0 0 12 24.8" fill="none" stroke="#9b3b3b" stroke-width="1.5" stroke-linecap="round" stroke-linejoin="round"><path d="M6 0.5V23.3"/><path d="M0.8 18.2L6 23.4L11.2 18.2"/></svg><div class="circ num" style="left:321px;top:657.7px;width:32px;height:32px;"><span style="position:absolute;left:0;top:9.35px;width:32px;text-align:center;font-size:14px;line-height:14px;font-weight:bold;color:#fff;">3</span></div><div style="left:369.00px;top:658.00px;width:674.60px;height:151.50px;background:#fafafa;border:1px solid #e5e7eb;border-radius:12px;box-sizing:border-box;"></div><svg class="i" style="left:384.00px;top:672.80px;" width="14" height="14" viewBox="0 0 24 24" fill="none" stroke="#9b3b3b" stroke-width="2" stroke-linecap="round" stroke-linejoin="round"><circle cx="12" cy="18" r="3"/><circle cx="6" cy="6" r="3"/><circle cx="18" cy="6" r="3"/><path d="M18 9v2c0 .6-.4 1-1 1H7c-.6 0-1-.4-1-1V9"/><path d="M12 12v3"/></svg><div class="t" style="left:404.00px;top:677.18px;font-size:10px;line-height:10px;color:#9b3b3b;font-weight:bold;font-family:'Liberation Sans', sans-serif;letter-spacing:0.6px;">PARALLEL PROCESSING</div><div style="left:384.00px;top:699.00px;width:645.00px;height:1.00px;border-top:1px dashed #eccfd0;"></div><div style="left:384.10px;top:712.00px;width:207.40px;height:83.00px;background:linear-gradient(135deg,#f1f6fe,#f6f9fe);border:1.25px solid #3b82f6;border-radius:10px;box-sizing:border-box;"></div><div style="left:394.50px;top:722.40px;width:32.00px;height:32.00px;background:#dbe8fd;border-radius:9px;"></div><svg class="i" style="left:401.50px;top:726.90px;" width="18" height="18" viewBox="0 0 24 24" fill="none" stroke="#3b82f6" stroke-width="2" stroke-linecap="round" stroke-linejoin="round"><circle cx="11" cy="11" r="8"/><path d="m21 21-4.3-4.3"/></svg><div class="t" style="left:436.70px;top:728.68px;font-size:11.6px;line-height:11.6px;color:#111827;font-weight:bold;font-family:'Liberation Sans', sans-serif;">Opportunity Scanner</div><div class="t" style="left:436.70px;top:750.20px;font-size:10.4px;line-height:10.4px;color:#6b7280;font-weight:normal;font-family:'Liberation Sans', sans-serif;">Identifies tax-loss</div><div class="t" style="left:436.70px;top:763.60px;font-size:10.4px;line-height:10.4px;color:#6b7280;font-weight:normal;font-family:'Liberation Sans', sans-serif;">harvesting opportunities</div><div style="left:436.70px;top:780.70px;width:124.80px;height:3.80px;background:#e5e7eb;border-radius:2px;"></div><div class="circ" style="left:570.1px;top:723.5px;width:13px;height:13px;background:#5f9cf3;"></div><div style="left:602.70px;top:712.00px;width:207.20px;height:83.00px;background:#fff;border:1px solid #e5e7eb;border-radius:10px;box-sizing:border-box;"></div><div style="left:613.10px;top:722.40px;width:32.00px;height:32.00px;background:#e0f7ec;border-radius:9px;"></div><svg class="i" style="left:620.10px;top:726.90px;" width="18" height="18" viewBox="0 0 24 24" fill="none" stroke="#10b981" stroke-width="2" stroke-linecap="round" stroke-linejoin="round"><path d="M20 13c0 5-3.5 7.5-7.66 8.95a1 1 0 0 1-.67-.01C7.5 20.5 4 18 4 13V6a1 1 0 0 1 1-1c2 0 4.5-1.2 6.24-2.72a1.17 1.17 0 0 1 1.52 0C14.51 3.81 17 5 19 5a1 1 0 0 1 1 1z"/><path d="m9 12 2 2 4-4"/></svg><div class="t" style="left:655.30px;top:728.68px;font-size:11.6px;line-height:11.6px;color:#111827;font-weight:bold;font-family:'Liberation Sans', sans-serif;">Compliance Guardian</div><div class="t" style="left:655.30px;top:750.20px;font-size:10.4px;line-height:10.4px;color:#6b7280;font-weight:normal;font-family:'Liberation Sans', sans-serif;">Validates wash-sale rules &amp;</div><div class="t" style="left:655.30px;top:763.60px;font-size:10.4px;line-height:10.4px;color:#6b7280;font-weight:normal;font-family:'Liberation Sans', sans-serif;">IRS compliance</div><div style="left:655.30px;top:780.70px;width:124.80px;height:3.80px;background:#e5e7eb;border-radius:2px;"></div><div class="circ" style="left:789.7px;top:724.8px;width:10.2px;height:10.2px;background:#d1d5db;"></div><div style="left:821.10px;top:712.00px;width:207.20px;height:83.00px;background:#fff;border:1px solid #e5e7eb;border-radius:10px;box-sizing:border-box;"></div><div style="left:831.50px;top:722.40px;width:32.00px;height:32.00px;background:#fef3e4;border-radius:9px;"></div><svg class="i" style="left:838.50px;top:726.90px;" width="18" height="18" viewBox="0 0 24 24" fill="none" stroke="#f59e0b" stroke-width="2" stroke-linecap="round" stroke-linejoin="round"><path d="m21.73 18-8-14a2 2 0 0 0-3.48 0l-8 14A2 2 0 0 0 4 21h16a2 2 0 0 0 1.73-3"/><path d="M12 9v4"/><path d="M12 17h.01"/></svg><div class="t" style="left:873.70px;top:728.68px;font-size:11.6px;line-height:11.6px;color:#111827;font-weight:bold;font-family:'Liberation Sans', sans-serif;">Risk Analyst</div><div class="t" style="left:873.70px;top:750.20px;font-size:10.4px;line-height:10.4px;color:#6b7280;font-weight:normal;font-family:'Liberation Sans', sans-serif;">Assesses portfolio impact &amp;</div><div class="t" style="left:873.70px;top:763.60px;font-size:10.4px;line-height:10.4px;color:#6b7280;font-weight:normal;font-family:'Liberation Sans', sans-serif;">exposure</div><div style="left:873.70px;top:780.70px;width:124.80px;height:3.80px;background:#e5e7eb;border-radius:2px;"></div><div class="circ" style="left:1008.1px;top:724.8px;width:10.2px;height:10.2px;background:#d1d5db;"></div><svg class="i" style="left:337.8px;top:790.6px" width="12" height="24.3" viewBox="0 0 12 24.3" fill="none" stroke="#9b3b3b" stroke-width="1.5" stroke-linecap="round" stroke-linejoin="round"><path d="M6 0.5V22.8"/><path d="M0.8 17.7L6 22.9L11.2 17.7"/></svg><div class="circ num" style="left:321px;top:818.6px;width:32px;height:32px;"><span style="position:absolute;left:0;top:9.35px;width:32px;text-align:center;font-size:14px;line-height:14px;font-weight:bold;color:#fff;">4</span></div><div style="left:369.00px;top:818.90px;width:674.60px;height:101.90px;background:#fff;border:1px solid #e5e7eb;border-radius:12px;box-sizing:border-box;"></div><div style="left:384.00px;top:836.40px;width:40.00px;height:40.00px;background:#feeaea;border-radius:10px;"></div><svg class="i" style="left:393.40px;top:843.90px;" width="20" height="20" viewBox="0 0 24 24" fill="none" stroke="#e04848" stroke-width="2" stroke-linecap="round" stroke-linejoin="round"><rect width="16" height="20" x="4" y="2" rx="2"/><line x1="8" x2="16" y1="6" y2="6"/><line x1="16" x2="16" y1="14" y2="18"/><path d="M16 10h.01"/><path d="M12 10h.01"/><path d="M8 10h.01"/><path d="M12 14h.01"/><path d="M8 14h.01"/><path d="M12 18h.01"/><path d="M8 18h.01"/></svg><div class="t" style="left:436.00px;top:841.43px;font-size:13.55px;line-height:13.55px;color:#111827;font-weight:bold;font-family:'Liberation Sans', sans-serif;">Tax Calculator Agent</div><div class="t" style="left:436.00px;top:866.17px;font-size:12.2px;line-height:12.2px;color:#6b7280;font-weight:normal;font-family:'Liberation Sans', sans-serif;">Computes tax savings, cost basis, and impact projections</div><div style="left:985.00px;top:845.00px;width:44.30px;height:22.70px;background:#f3f4f6;border-radius:12px;"></div><div class="t" style="left:977.15px;top:852.17px;font-size:9.6px;line-height:9.6px;color:#6b7280;font-weight:bold;font-family:'Liberation Sans', sans-serif;width:60px;text-align:center;letter-spacing:0.5px;">IDLE</div><div style="left:384.00px;top:895.30px;width:603.10px;height:5.60px;background:#e5e7eb;border-radius:3px;"></div><div class="t" style="left:997.50px;top:892.51px;font-size:10.8px;line-height:10.8px;color:#6b7280;font-weight:bold;font-family:'Liberation Sans', sans-serif;">0%</div><svg class="i" style="left:337.8px;top:901.2px" width="12" height="24.2" viewBox="0 0 12 24.2" fill="none" stroke="#9b3b3b" stroke-width="1.5" stroke-linecap="round" stroke-linejoin="round"><path d="M6 0.5V22.7"/><path d="M0.8 17.6L6 22.8L11.2 17.6"/></svg><div class="circ num" style="left:321px;top:930px;width:32px;height:32px;"><span style="position:absolute;left:0;top:9.35px;width:32px;text-align:center;font-size:14px;line-height:14px;font-weight:bold;color:#fff;">5</span></div><div style="left:369.00px;top:930.70px;width:674.60px;height:137.30px;background:#fafafa;border:1px solid #e5e7eb;border-radius:12px;box-sizing:border-box;"></div><svg class="i" style="left:384.00px;top:945.00px;" width="14" height="14" viewBox="0 0 24 24" fill="none" stroke="#9b3b3b" stroke-width="2" stroke-linecap="round" stroke-linejoin="round"><circle cx="12" cy="18" r="3"/><circle cx="6" cy="6" r="3"/><circle cx="18" cy="6" r="3"/><path d="M18 9v2c0 .6-.4 1-1 1H7c-.6 0-1-.4-1-1V9"/><path d="M12 12v3"/></svg><div class="t" style="left:403.70px;top:949.33px;font-size:10px;line-height:10px;color:#9b3b3b;font-weight:bold;font-family:'Liberation Sans', sans-serif;letter-spacing:0.6px;">OPTIMIZATION &amp; STRATEGY</div><div style="left:384.00px;top:970.00px;width:645.00px;height:1.00px;border-top:1px dashed #eccfd0;"></div><div style="left:384.50px;top:983.80px;width:316.20px;height:69.20px;background:#fff;border:1px solid #e5e7eb;border-radius:10px;box-sizing:border-box;"></div><div style="left:394.70px;top:994.60px;width:32.00px;height:32.00px;background:#e3f6f9;border-radius:9px;"></div><svg class="i" style="left:401.70px;top:999.20px;" width="18" height="18" viewBox="0 0 24 24" fill="none" stroke="#06b6d4" stroke-width="2" stroke-linecap="round" stroke-linejoin="round"><path d="M3 3v18h18"/><path d="m19 9-5 5-4-4-3 3"/></svg><div class="t" style="left:436.90px;top:1001.03px;font-size:11.6px;line-height:11.6px;color:#111827;font-weight:bold;font-family:'Liberation Sans', sans-serif;">Portfolio Optimizer</div><div class="t" style="left:436.90px;top:1021.85px;font-size:10.4px;line-height:10.4px;color:#6b7280;font-weight:normal;font-family:'Liberation Sans', sans-serif;">Optimizes replacement selections</div><div style="left:436.90px;top:1039.40px;width:233.40px;height:3.70px;background:#e5e7eb;border-radius:2px;"></div><div class="circ" style="left:680.1px;top:996.2px;width:10.2px;height:10.2px;background:#d1d5db;"></div><div style="left:711.90px;top:983.80px;width:317.50px;height:69.20px;background:#fff;border:1px solid #e5e7eb;border-radius:10px;box-sizing:border-box;"></div><div style="left:722.10px;top:994.60px;width:32.00px;height:32.00px;background:#fce8f2;border-radius:9px;"></div><svg class="i" style="left:729.10px;top:999.20px;" width="18" height="18" viewBox="0 0 24 24" fill="none" stroke="#db2777" stroke-width="2" stroke-linecap="round" stroke-linejoin="round"><circle cx="12" cy="12" r="9.5"/><circle cx="12" cy="12" r="5.8"/><circle cx="12" cy="12" r="1.6" fill="#db2777"/></svg><div class="t" style="left:764.30px;top:1001.03px;font-size:11.6px;line-height:11.6px;color:#111827;font-weight:bold;font-family:'Liberation Sans', sans-serif;">Strategy Planner</div><div class="t" style="left:764.30px;top:1021.85px;font-size:10.4px;line-height:10.4px;color:#6b7280;font-weight:normal;font-family:'Liberation Sans', sans-serif;">Plans execution &amp; timing</div><div style="left:764.30px;top:1039.40px;width:234.00px;height:3.70px;background:#e5e7eb;border-radius:2px;"></div><div class="circ" style="left:1008.8000000000001px;top:996.2px;width:10.2px;height:10.2px;background:#d1d5db;"></div><svg class="i" style="left:337.8px;top:1052.8px" width="12" height="20.8" viewBox="0 0 12 20.8" fill="none" stroke="#9b3b3b" stroke-width="1.5" stroke-linecap="round" stroke-linejoin="round"><path d="M6 0.5V19.3"/><path d="M0.8 14.2L6 19.4L11.2 14.2"/></svg><div class="circ num" style="left:321px;top:1076.7px;width:32px;height:32px;"><span style="position:absolute;left:0;top:9.35px;width:32px;text-align:center;font-size:14px;line-height:14px;font-weight:bold;color:#fff;">6</span></div><div style="left:369.00px;top:1076.70px;width:674.60px;height:123.30px;background:#f3fdf8;border:1.5px solid #10b981;border-radius:12px;box-sizing:border-box;"></div><div style="left:1097.50px;top:354.00px;width:779.50px;height:846.00px;background:#fff;border:1px solid #e7e8eb;border-radius:12px;box-sizing:border-box;box-shadow:0 1px 3px rgba(0,0,0,.05);"></div><svg class="i" style="left:1117.60px;top:377.60px;" width="18" height="18" viewBox="0 0 24 24" fill="none" stroke="#6b7280" stroke-width="2" stroke-linecap="round" stroke-linejoin="round"><polyline points="22 12 18 12 15 21 9 3 6 12 2 12"/></svg><div class="t" style="left:1144.30px;top:383.46px;font-size:14.75px;line-height:14.75px;color:#0f172a;font-weight:bold;font-family:'Liberation Sans', sans-serif;">Agent Reasoning Chain</div><div style="left:1779.00px;top:376.90px;width:78.00px;height:26.10px;background:#f3f4f6;border-radius:13px;"></div><div class="t" style="left:1779.00px;top:383.64px;font-size:12px;line-height:12px;color:#6b7280;font-weight:normal;font-family:'Liberation Sans', sans-serif;width:78px;text-align:center;">7 thoughts</div><div style="position:absolute;left:1117.3px;top:426px;width:729.2px;height:320.5px;overflow:hidden;"><div style="position:absolute;left:0;top:0px;width:729.2px;height:108.2px;background:#faf5fe;border-radius:12px;border-left:3px solid #8b5cf6;box-sizing:border-box;"></div><div style="position:absolute;left:14.5px;top:12.3px;width:28px;height:28px;background:rgba(255,255,255,.85);border-radius:8px;"></div><svg class="i" style="left:21.5px;top:16.5px" width="14" height="14" viewBox="0 0 24 24" fill="none" stroke="#6b7280" stroke-width="2" stroke-linecap="round" stroke-linejoin="round"><line x1="6" x2="6" y1="3" y2="15"/><circle cx="18" cy="6" r="3"/><circle cx="6" cy="18" r="3"/><path d="M18 9a9 9 0 0 1-9 9"/></svg><div class="t" style="left:54.70px;top:17.93px;font-size:10px;line-height:10px;color:#9b3b3b;font-weight:bold;font-family:'Liberation Sans', sans-serif;letter-spacing:0.9px;">DECISION</div><div style="position:absolute;left:621.8px;top:13.7px;width:94px;height:18.2px;background:#eafcf3;border-radius:9px;"></div><div class="t" style="left:621.80px;top:16.33px;font-size:11.25px;line-height:11.25px;color:#10b981;font-weight:normal;font-family:'Liberation Sans', sans-serif;width:94px;text-align:center;">92% confidence</div><div class="t" style="left:54.70px;top:38.54px;font-size:13.3px;line-height:13.3px;color:#111827;font-weight:normal;font-family:'Liberation Sans', sans-serif;">Identified 7 positions meeting harvest criteria</div><div style="position:absolute;left:54.7px;top:59.2px;width:662.6px;height:37px;background:#fff;border-radius:8px;"></div><div class="t" style="left:62.80px;top:72.13px;font-size:10px;line-height:10px;color:#6b7280;font-weight:normal;font-family:'Liberation Mono', monospace;">&lt;&gt; Criteria: Loss &gt;= $500 AND Loss% &gt;= 5%</div><div style="position:absolute;left:0;top:120.7px;width:729.2px;height:108.2px;background:#f8fafc;border-radius:12px;border-left:3px solid #3b82f6;box-sizing:border-box;"></div><div style="position:absolute;left:14.5px;top:133.0px;width:28px;height:28px;background:rgba(255,255,255,.85);border-radius:8px;"></div><svg class="i" style="left:21.5px;top:137.2px" width="14" height="14" viewBox="0 0 24 24" fill="none" stroke="#6b7280" stroke-width="2" stroke-linecap="round" stroke-linejoin="round"><circle cx="11" cy="11" r="8"/><path d="m21 21-4.3-4.3"/></svg><div class="t" style="left:54.70px;top:138.63px;font-size:10px;line-height:10px;color:#9b3b3b;font-weight:bold;font-family:'Liberation Sans', sans-serif;letter-spacing:0.9px;">ANALYSIS</div><div style="position:absolute;left:621.8px;top:134.4px;width:94px;height:18.2px;background:#eafcf3;border-radius:9px;"></div><div class="t" style="left:621.80px;top:137.03px;font-size:11.25px;line-height:11.25px;color:#10b981;font-weight:normal;font-family:'Liberation Sans', sans-serif;width:94px;text-align:center;">95% confidence</div><div class="t" style="left:54.70px;top:159.74px;font-size:13.3px;line-height:13.3px;color:#111827;font-weight:normal;font-family:'Liberation Sans', sans-serif;">Found 14 positions with unrealized losses out of 30 total positions</div><div style="position:absolute;left:54.7px;top:179.9px;width:662.6px;height:37px;background:#fff;border-radius:8px;"></div><div class="t" style="left:62.80px;top:192.84px;font-size:10px;line-height:10px;color:#6b7280;font-weight:normal;font-family:'Liberation Mono', monospace;">&lt;&gt; Loss threshold: 5% | Filtering positions with &gt; -$500 loss</div><div style="position:absolute;left:0;top:241.0px;width:729.2px;height:108.2px;background:#f8fafc;border-radius:12px;border-left:3px solid #3b82f6;box-sizing:border-box;"></div><div style="position:absolute;left:14.5px;top:253.3px;width:28px;height:28px;background:rgba(255,255,255,.85);border-radius:8px;"></div><svg class="i" style="left:21.5px;top:257.5px" width="14" height="14" viewBox="0 0 24 24" fill="none" stroke="#6b7280" stroke-width="2" stroke-linecap="round" stroke-linejoin="round"><circle cx="11" cy="11" r="8"/><path d="m21 21-4.3-4.3"/></svg><div class="t" style="left:54.70px;top:258.94px;font-size:10px;line-height:10px;color:#9b3b3b;font-weight:bold;font-family:'Liberation Sans', sans-serif;letter-spacing:0.9px;">ANALYSIS</div><div style="position:absolute;left:615.8px;top:254.7px;width:100px;height:18.2px;background:#eafcf3;border-radius:9px;"></div><div class="t" style="left:615.80px;top:257.33px;font-size:11.25px;line-height:11.25px;color:#10b981;font-weight:normal;font-family:'Liberation Sans', sans-serif;width:100px;text-align:center;">100% confidence</div><div class="t" style="left:54.70px;top:280.04px;font-size:13.3px;line-height:13.3px;color:#111827;font-weight:normal;font-family:'Liberation Sans', sans-serif;">Scanning 4 accounts with 30 total positions</div><div style="position:absolute;left:54.7px;top:300.2px;width:662.6px;height:37px;background:#fff;border-radius:8px;"></div><div class="t" style="left:62.80px;top:313.14px;font-size:10px;line-height:10px;color:#6b7280;font-weight:normal;font-family:'Liberation Mono', monospace;">&lt;&gt; Initializing parallel position analysis using streaming data pipeline</div></div><div style="left:1847.00px;top:426.00px;width:10.00px;height:320.50px;background:#f7eeee;"></div><svg class="i" style="left:1848px;top:428.5px" width="8" height="6" viewBox="0 0 8 6"><path d="M4 0.5L7.5 5.5H0.5z" fill="#d4a5a8"/></svg><div style="left:1848.60px;top:438.40px;width:6.00px;height:110.20px;background:#d4a5a8;border-radius:3px;"></div><svg class="i" style="left:1848px;top:739px" width="8" height="6" viewBox="0 0 8 6"><path d="M4 5.5L7.5 0.5H0.5z" fill="#d4a5a8"/></svg><div style="left:1117.50px;top:762.10px;width:738.70px;height:1.00px;background:#e5e7eb;"></div><svg class="i" style="left:1117.00px;top:784.00px;" width="15" height="15" viewBox="0 0 24 24" fill="none" stroke="#6b7280" stroke-width="2" stroke-linecap="round" stroke-linejoin="round"><path d="M21 15a2 2 0 0 1-2 2H7l-4 4V5a2 2 0 0 1 2-2h14a2 2 0 0 1 2 2z"/></svg><div class="t" style="left:1138.00px;top:788.06px;font-size:12.8px;line-height:12.8px;color:#6b7280;font-weight:bold;font-family:'Liberation Sans', sans-serif;">Inter-Agent Protocol</div><div style="left:1117.80px;top:819.20px;width:739.20px;height:93.50px;background:#f3f4f6;border-radius:10px;"></div><div style="left:1127.80px;top:828.80px;width:56.70px;height:20.80px;background:#dbeafe;border-radius:11px;"></div><div class="t" style="left:1127.80px;top:833.69px;font-size:11px;line-height:11px;color:#1e40af;font-weight:normal;font-family:'Liberation Sans', sans-serif;width:56.7px;text-align:center;-webkit-text-stroke:0.3px #1e40af;">Scanner</div><svg class="i" style="left:1192.50px;top:832.70px;" width="12" height="12" viewBox="0 0 24 24" fill="none" stroke="#9ca3af" stroke-width="2" stroke-linecap="round" stroke-linejoin="round"><path d="M5 12h14"/><path d="m12 5 7 7-7 7"/></svg><div style="left:1212.70px;top:828.80px;width:80.00px;height:20.80px;background:#dcfce7;border-radius:11px;"></div><div class="t" style="left:1212.70px;top:833.69px;font-size:11px;line-height:11px;color:#166534;font-weight:normal;font-family:'Liberation Sans', sans-serif;width:80px;text-align:center;-webkit-text-stroke:0.3px #166534;">Orchestrator</div><div class="t" style="left:1127.80px;top:862.01px;font-size:12.1px;line-height:12.1px;color:#374151;font-weight:normal;font-family:'Liberation Sans', sans-serif;">Portfolio scan initiated. Analyzing 30 positions across 4 accounts.</div><div style="left:1127.80px;top:884.00px;width:62.50px;height:19.30px;background:#e5e7eb;border-radius:5px;"></div><div class="t" style="left:1127.80px;top:888.50px;font-size:10.4px;line-height:10.4px;color:#6b7280;font-weight:normal;font-family:'Liberation Sans', sans-serif;width:62.5px;text-align:center;">notification</div><div style="left:1117.80px;top:923.40px;width:739.20px;height:93.50px;background:#f3f4f6;border-radius:10px;"></div><div style="left:1127.80px;top:933.00px;width:77.50px;height:20.80px;background:#dbeafe;border-radius:11px;"></div><div class="t" style="left:1127.80px;top:937.89px;font-size:11px;line-height:11px;color:#1e40af;font-weight:normal;font-family:'Liberation Sans', sans-serif;width:77.5px;text-align:center;-webkit-text-stroke:0.3px #1e40af;">Market Intel</div><svg class="i" style="left:1213.30px;top:936.90px;" width="12" height="12" viewBox="0 0 24 24" fill="none" stroke="#9ca3af" stroke-width="2" stroke-linecap="round" stroke-linejoin="round"><path d="M5 12h14"/><path d="m12 5 7 7-7 7"/></svg><div style="left:1233.50px;top:933.00px;width:80.00px;height:20.80px;background:#dcfce7;border-radius:11px;"></div><div class="t" style="left:1233.50px;top:937.89px;font-size:11px;line-height:11px;color:#166534;font-weight:normal;font-family:'Liberation Sans', sans-serif;width:80px;text-align:center;-webkit-text-stroke:0.3px #166534;">Orchestrator</div><div class="t" style="left:1127.80px;top:966.21px;font-size:12.1px;line-height:12.1px;color:#374151;font-weight:normal;font-family:'Liberation Sans', sans-serif;">Market analysis complete. neutral conditions with 40% harvesting window score.</div><div style="left:1127.80px;top:988.20px;width:62.50px;height:19.30px;background:#e5e7eb;border-radius:5px;"></div><div class="t" style="left:1127.80px;top:992.70px;font-size:10.4px;line-height:10.4px;color:#6b7280;font-weight:normal;font-family:'Liberation Sans', sans-serif;width:62.5px;text-align:center;">notification</div><div style="left:1117.80px;top:1033.00px;width:739.20px;height:167.00px;background:#fff;border:1px solid #e5e7eb;border-radius:16px;box-sizing:border-box;"></div><svg class="i" style="left:1137.50px;top:1054.00px;" width="16" height="16" viewBox="0 0 24 24" fill="none" stroke="#f59e0b" stroke-width="2" stroke-linecap="round" stroke-linejoin="round"><path d="M4 14a1 1 0 0 1-.78-1.63l9.9-10.2a.5.5 0 0 1 .86.46l-1.92 6.02A1 1 0 0 0 13 10h7a1 1 0 0 1 .78 1.63l-9.9 10.2a.5.5 0 0 1-.86-.46l1.92-6.02A1 1 0 0 0 11 14z"/></svg><div class="t" style="left:1161.00px;top:1057.56px;font-size:13.4px;line-height:13.4px;color:#111827;font-weight:bold;font-family:'Liberation Sans', sans-serif;">Autonomous AI Decisions</div><div style="left:249.00px;top:64.00px;width:10.00px;height:1016.00px;background:#f8f0f0;"></div><svg class="i" style="left:250px;top:67px" width="8" height="6" viewBox="0 0 8 6"><path d="M4 0.5L7.5 5.5H0.5z" fill="#d4a5a8"/></svg><div style="left:251.00px;top:75.80px;width:6.00px;height:900.00px;background:#d4a5a8;border-radius:3px;"></div><svg class="i" style="left:250px;top:1071.5px" width="8" height="6" viewBox="0 0 8 6"><path d="M4 5.5L7.5 0.5H0.5z" fill="#d4a5a8"/></svg><div style="left:259.00px;top:64.00px;width:1.00px;height:1016.00px;background:#e5e7eb;"></div><div style="left:1910.00px;top:64.00px;width:10.00px;height:1016.00px;background:#ebe5e7;"></div><svg class="i" style="left:1911px;top:67px" width="8" height="6" viewBox="0 0 8 6"><path d="M4 0.5L7.5 5.5H0.5z" fill="#d4a5a8"/></svg><div style="left:1912.00px;top:76.50px;width:5.60px;height:452.10px;background:#cda3a6;border-radius:3px;"></div><div style="left:0.00px;top:64.00px;width:1920.00px;height:3.00px;background:linear-gradient(180deg,rgba(0,0,0,.045),rgba(0,0,0,0));"></div><svg class="i" style="left:1911px;top:1071.5px" width="8" height="6" viewBox="0 0 8 6"><path d="M4 5.5L7.5 0.5H0.5z" fill="#d4a5a8"/></svg>
</div></body></html>
